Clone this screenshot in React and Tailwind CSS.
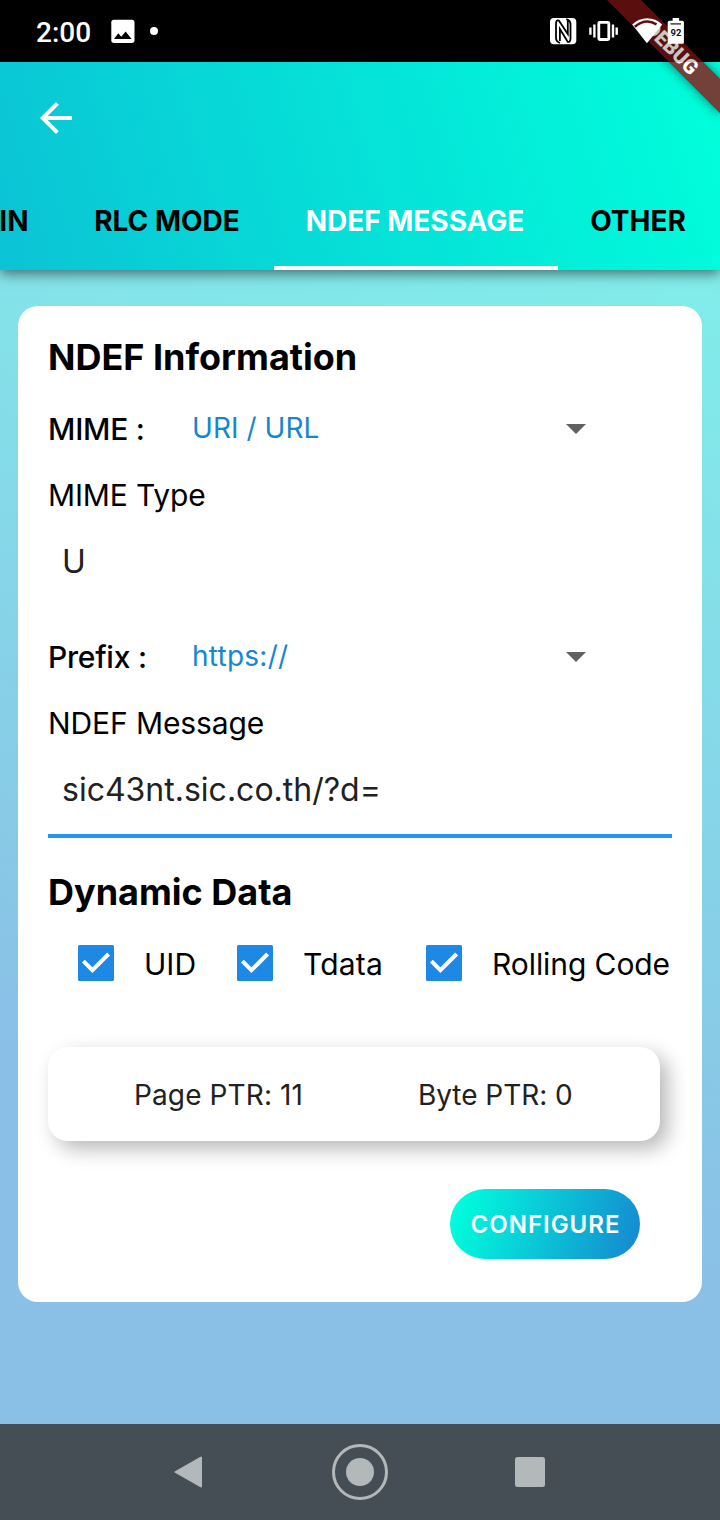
function StatusBar() {
  return (
    <div className="flex h-[62px] shrink-0 items-center bg-black pl-9 pr-9 text-white">
      <span className="w-[75px] pt-[3px] font-['Roboto',sans-serif] text-[28px] leading-none font-medium">2:00</span>
      <svg className="h-6 w-6 shrink-0" viewBox="0 0 24 24">
        <rect x="0.3" y="0.7" width="23.2" height="23.2" rx="2.6" fill="#fff" />
        <path d="M3 20 L7.3 14.2 L10.3 17.8 L14.6 12.4 L20.6 20 Z" fill="#000" />
      </svg>
      <span className="ml-[15px] h-2 w-2 rounded-full bg-white" />
      <svg className="ml-auto h-[30px] w-[136px] shrink-0" viewBox="548 16 136 30">
        <rect x="550" y="18" width="26.3" height="26.3" rx="4" fill="#fff" />
        <path
          d="M560 43 Q556 41.5 556 38 V24 Q556 19.5 558.8 20.5 L567.8 34 V20.5 M566.3 19.2 Q570.5 20.7 570.5 24.3 V38.2 Q570.5 42.7 567.7 41.8 L559.9 29 V41"
          fill="none"
          stroke="#000"
          strokeWidth="1.8"
        />
        <rect x="598.8" y="22.3" width="10" height="17.2" rx="1" fill="none" stroke="#fff" strokeWidth="2.8" />
        <path d="M594.4 24.5V37.5M590.4 27.5V34.7M613 24.5V37.5M616.7 27.5V34.7" stroke="#fff" strokeWidth="2.4" />
      </svg>
    </div>
  );
}

function DebugBanner() {
  return (
    <div className="pointer-events-none absolute inset-0 z-20 overflow-hidden">
      <div className="absolute top-[36px] left-[592px] h-6 w-[160px] rotate-45 bg-black/50 shadow-[0_0_12px_rgba(0,0,0,0.5)]">
        <div className="flex h-full items-center justify-center bg-[#b71c1c]/63">
          <span className="font-['Roboto',sans-serif] text-[20.4px] leading-none font-black text-white">DEBUG</span>
        </div>
      </div>
      <div className="absolute top-0 right-0 h-[62px] w-[114px] bg-black/22 [clip-path:polygon(0_0,100%_0,100%_100%,62px_100%)]" />
      <svg className="absolute top-4 left-[630px] h-[30px] w-[56px]" viewBox="630 16 56 30">
        <path d="M632.2 24.6 C641 16.2 653.5 16.2 662.2 24.6 L646.9 43.3 Z" fill="#fff" />
        <path d="M634.8 26.8 C642.5 20.2 650 20.4 656.5 24.4" fill="none" stroke="#5a0f10" strokeWidth="2.6" />
        <path d="M672.6 18h6.5v2.7h3.3a1.5 1.5 0 0 1 1.5 1.5v20a1.5 1.5 0 0 1-1.5 1.5h-13.2a1.5 1.5 0 0 1-1.5-1.5v-20a1.5 1.5 0 0 1 1.5-1.5h3.4z" fill="#fff" />
        <path d="M670.5 23.9h10.5" stroke="#222" strokeWidth="1.3" />
        <text x="675.9" y="36" textAnchor="middle" className="font-['Roboto',sans-serif] text-[9.5px] font-bold" fill="#111">92</text>
      </svg>
    </div>
  );
}

const tabStyle = "flex shrink-0 items-center justify-center whitespace-nowrap";

function AppBar() {
  return (
    <header className="relative z-10 flex h-[208px] shrink-0 flex-col bg-[linear-gradient(254deg,#00ffdb_0%,#0bc3d5_100%)] shadow-[0_4px_12px_rgba(0,0,0,0.5)]">
      <div className="flex h-28 items-center pl-8">
        <svg className="h-12 w-12" viewBox="0 0 24 24" fill="#fff">
          <path d="M20 11H7.83l5.59-5.59L12 4l-8 8 8 8 1.41-1.41L7.83 13H20v-2z" />
        </svg>
      </div>
      <nav className="flex h-24 overflow-hidden text-[28px] leading-none font-bold text-black">
        <div className="flex w-[62px] shrink-0 items-center justify-end pr-[33.5px] pb-0.5 whitespace-nowrap">IN</div>
        <div className={`${tabStyle} w-[212px] pr-0.5 pb-0.5`}>RLC MODE</div>
        <div className={`${tabStyle} w-[284px] border-b-4 border-white pt-0.5 pr-0.5 text-white`}>NDEF MESSAGE</div>
        <div className={`${tabStyle} w-[162px] pr-0.5 pb-0.5`}>OTHER</div>
      </nav>
    </header>
  );
}

function DropdownRow({ label, value, valueClass }) {
  return (
    <div className="flex h-16 items-center">
      <span className="w-36 pt-px text-[30px] leading-none font-medium tracking-[-0.25px] text-black">{label}</span>
      <span className={`flex-1 text-[28px] leading-none text-[#1686d0] ${valueClass}`}>{value}</span>
      <svg className="mr-[72px] h-12 w-12" viewBox="0 0 24 24" fill="#616161">
        <path d="M7 10l5 5 5-5z" />
      </svg>
    </div>
  );
}

function Check({ label, className, labelClass }) {
  return (
    <label className={`flex items-center ${className}`}>
      <svg className="h-9 w-9 shrink-0" viewBox="0 0 36 36">
        <rect width="36" height="36" rx="1.5" fill="#1e88e5" />
        <path d="M5.4 16.2 L14.4 25.2 L30.6 9" fill="none" stroke="#fff" strokeWidth="4" />
      </svg>
      <span className={`ml-[30px] pt-0.5 text-[30px] leading-none font-normal whitespace-nowrap ${labelClass}`}>{label}</span>
    </label>
  );
}

export default function App() {
  return (
    <div className="relative flex h-[1520px] w-[720px] flex-col overflow-hidden bg-white font-['Inter',sans-serif] text-black">
      <StatusBar />
      <AppBar />
      <main className="flex-1 bg-[linear-gradient(198deg,#81eeea_0%,#8ac0e6_72%)] px-[18px] pt-[35.5px]">
        <section className="flex h-[996.5px] flex-col rounded-[20px] bg-white px-[30px] pt-[21.5px]">
          <h2 className="h-[60px] text-[36px] leading-[60px] font-bold">NDEF Information</h2>
          <div className="mt-[9px]">
            <DropdownRow label="MIME :" value="URI / URL" valueClass="tracking-[0.05px]" />
          </div>
          <p className="mt-[5px] h-[60px] text-[30px] leading-[60px] font-normal tracking-[-0.15px]">MIME Type</p>
          <p className="mt-[7px] h-[60px] pl-[14px] text-[32px] leading-[60px] font-normal text-[#212121]">U</p>
          <div className="mt-[32px]">
            <DropdownRow label="Prefix :" value="https://" valueClass="tracking-[0.25px]" />
          </div>
          <p className="mt-[5px] h-[60px] text-[30px] leading-[60px] font-normal tracking-[-0.1px]">NDEF Message</p>
          <div className="mt-[7px] h-[77.5px] border-b-4 border-[#2196f3]">
            <p className="h-[60px] pl-[14px] text-[32px] leading-[60px] font-normal text-[#212121]">
              sic43nt.sic.co.th/?d=
            </p>
          </div>
          <h2 className="mt-[24px] h-[60px] text-[36px] leading-[60px] font-bold">Dynamic Data</h2>
          <div className="mt-[14px] flex h-[54px] items-center pl-[30px]">
            <Check label="UID" className="w-[159px]" labelClass="tracking-normal" />
            <Check label="Tdata" className="w-[189px]" labelClass="tracking-[0.2px]" />
            <Check label="Rolling Code" className="" labelClass="tracking-[-0.08px]" />
          </div>
          <div className="mt-[57px] flex h-[94px] w-[612px] shrink-0 items-center rounded-[20px] bg-white pl-[86px] text-[28px] leading-none font-normal tracking-[0.12px] text-[#212121] shadow-[8px_8px_20px_rgba(0,0,0,0.28)]">
            <span className="w-[284px] pt-0.5">Page PTR: 11</span>
            <span className="pt-0.5 tracking-[-0.05px]">Byte PTR: 0</span>
          </div>
          <button className="mt-[48.5px] mr-8 flex h-[70px] w-[190px] shrink-0 items-center justify-center self-end rounded-full bg-[linear-gradient(108deg,#00ffdd_4%,#1686d0_100%)] pt-0.5 pl-px text-[24px] leading-none font-semibold tracking-[1px] text-white">
            CONFIGURE
          </button>
        </section>
      </main>
      <footer className="flex h-24 shrink-0 bg-[#454e54]">
        <svg className="h-24 w-full" viewBox="0 0 720 96">
          <path d="M175.5 48 L201 33.5 V62.5 Z" fill="#b3b8ba" stroke="#b3b8ba" strokeWidth="2" strokeLinejoin="round" />
          <circle cx="360" cy="48" r="26.5" fill="none" stroke="#b3b8ba" strokeWidth="3" />
          <circle cx="360" cy="48" r="14" fill="#b3b8ba" />
          <rect x="515" y="33" width="30" height="30" rx="2.5" fill="#b3b8ba" />
        </svg>
      </footer>
      <DebugBanner />
    </div>
  );
}
